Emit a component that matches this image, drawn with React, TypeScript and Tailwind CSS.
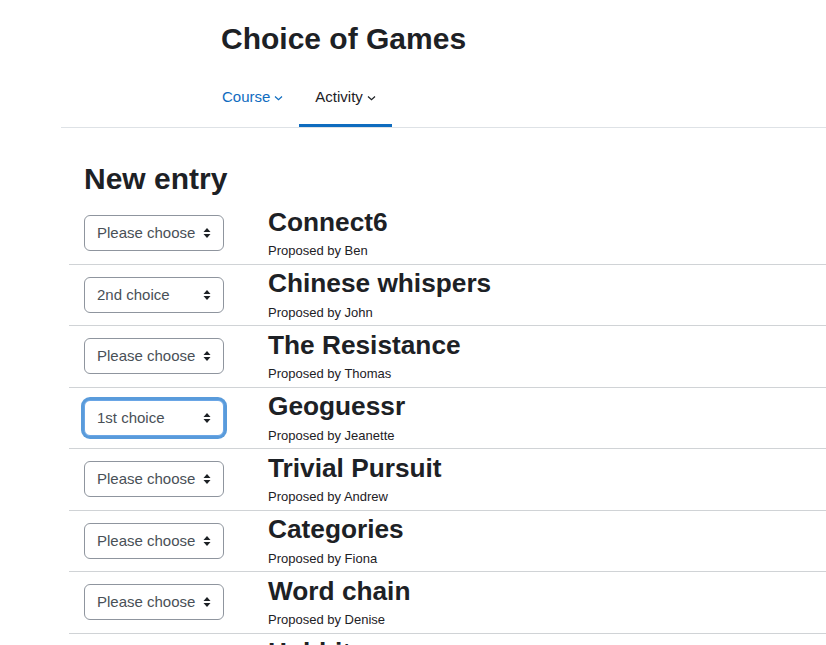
import React from 'react';

type Entry = {
  name: string;
  by: string;
  choice: string;
  focused?: boolean;
};

const entries: Entry[] = [
  { name: 'Connect6', by: 'Ben', choice: 'Please choose' },
  { name: 'Chinese whispers', by: 'John', choice: '2nd choice' },
  { name: 'The Resistance', by: 'Thomas', choice: 'Please choose' },
  { name: 'Geoguessr', by: 'Jeanette', choice: '1st choice', focused: true },
  { name: 'Trivial Pursuit', by: 'Andrew', choice: 'Please choose' },
  { name: 'Categories', by: 'Fiona', choice: 'Please choose' },
  { name: 'Word chain', by: 'Denise', choice: 'Please choose' },
  { name: 'Hobbit', by: 'Karen', choice: 'Please choose' },
];

const Chevron = () => (
  <svg width="9" height="6" viewBox="0 0 9 6" fill="none" className="ml-[4px] mt-[2px]">
    <path d="M1 1.5L4.5 4.8L8 1.5" stroke="currentColor" strokeWidth="1.2" />
  </svg>
);

const UpDown = () => (
  <svg width="8" height="12" viewBox="0 0 8 12" className="text-[#1d2125]">
    <path d="M4 1L7.5 5H0.5Z" fill="currentColor" />
    <path d="M4 11L7.5 7H0.5Z" fill="currentColor" />
  </svg>
);

// fake select – native ones render differently per platform
const ChoiceBox = ({ value, focused }: { value: string; focused?: boolean }) => (
  <div
    className={`flex h-[36px] w-[140px] items-center justify-between rounded-[6px] border bg-white pl-[12px] pr-[12px] text-[15px] text-[#495057] ${
      focused
        ? 'border-[#6aa6e6] shadow-[0_0_0_3px_rgba(48,130,210,0.8)]'
        : 'border-[#8f959e]'
    }`}
  >
    <span>{value}</span>
    <UpDown />
  </div>
);

export default function App() {
  return (
    <div className="h-[645px] overflow-hidden bg-white text-[#1d2125]" style={{ fontFamily: '"Liberation Sans", Arial, sans-serif' }}>
      <div className="ml-[61px]">
        <header className="border-b border-[#dee2e6]">
          <h1 className="pl-[160px] pt-[21px] text-[30px] font-bold leading-[36px]">Choice of Games</h1>
          <nav className="mt-[12px] flex pl-[145px] text-[15px] leading-[22.5px]">
            <a className="flex items-center border-b-[3px] border-transparent px-[16px] pb-[15.5px] pt-[17px] text-[#0f6cbf]">
              Course
              <Chevron />
            </a>
            <a className="flex items-center border-b-[3px] border-[#0f6cbf] px-[16px] pb-[15.5px] pt-[17px] text-[#1d2125]">
              Activity
              <Chevron />
            </a>
          </nav>
        </header>

        <main className="pt-[33px]">
          <h2 className="mb-[6px] pl-[23px] text-[30px] font-bold leading-[36px]">New entry</h2>
          <div className="ml-[8px]">
            {entries.map((e, i) => (
              <div
                key={e.name}
                className={`flex items-center pl-[15px] ${i > 0 ? 'border-t border-[#d0d3d6]' : ''}`}
              >
                <div className="w-[184px] shrink-0 py-[12.25px]">
                  <ChoiceBox value={e.choice} focused={e.focused} />
                </div>
                <div className="pb-[2.5px] pt-[3.5px]">
                  <h3 className="mb-[2.75px] text-[26.25px] font-bold leading-[31.5px]">{e.name}</h3>
                  <p className="text-[13px] leading-[19.5px]">Proposed by {e.by}</p>
                </div>
              </div>
            ))}
          </div>
        </main>
      </div>
    </div>
  );
}
